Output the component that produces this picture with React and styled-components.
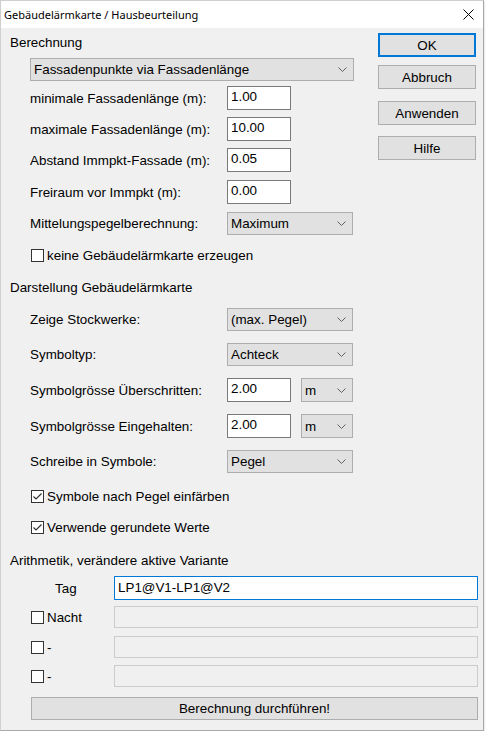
import React from 'react';
import styled, { createGlobalStyle } from 'styled-components';

const GlobalStyle = createGlobalStyle`
  html, body {
    margin: 0;
    padding: 0;
    background: #ffffff;
  }
  body {
    font-family: "Liberation Sans", Arial, sans-serif;
    font-size: 13.4px;
    color: #000;
  }
`;

const Window = styled.div`
  width: 484px;
  height: 731px;
  box-sizing: border-box;
  border: 1px solid #cfcfcf;
  border-right-color: #a9a9a9;
  border-bottom-color: #a9a9a9;
  box-shadow: 1px 1px 1px rgba(0, 0, 0, 0.08);
  background: #f0f0f0;
  display: flex;
  flex-direction: column;
  overflow: hidden;
`;

const TitleBar = styled.div`
  height: 27px;
  background: #ffffff;
  display: flex;
  align-items: center;
  justify-content: space-between;
  padding: 0 9px 0 3px;
  flex-shrink: 0;
`;

const Title = styled.span`
  font-family: "Segoe UI", "Noto Sans", sans-serif;
  font-size: 11px;
  color: #000;
  margin-top: -1px;
`;

const Body = styled.div`
  flex: 1;
  display: flex;
  flex-direction: column;
  padding: 0 0 0 9px;
`;

const Upper = styled.div`
  display: flex;
  align-items: flex-start;
`;

const FormColumn = styled.div`
  width: 345px;
  display: flex;
  flex-direction: column;
`;

const ButtonColumn = styled.div`
  display: flex;
  flex-direction: column;
  margin-left: 23px;
  padding-top: 5px;
`;

const SectionTitle = styled.div`
  height: 16px;
  line-height: 16px;
  margin-top: ${p => p.$gap}px;
  white-space: nowrap;
`;

const Row = styled.div`
  display: flex;
  align-items: center;
  height: ${p => p.$h || 24}px;
  margin-top: ${p => p.$gap}px;
  padding-left: 20px;
`;

const Label = styled.span`
  width: 197px;
  flex-shrink: 0;
  white-space: nowrap;
`;

const TextBox = styled.div`
  box-sizing: border-box;
  width: ${p => p.$w || 64}px;
  height: 24px;
  background: #ffffff;
  border: 1px solid #7a7a7a;
  padding: 2px 0 0 3px;
  line-height: 16px;
  white-space: nowrap;
`;

const ComboBox = styled.div`
  box-sizing: border-box;
  width: ${p => p.$w}px;
  height: ${p => p.$h || 23}px;
  margin-left: ${p => p.$ml || 0}px;
  background: #e1e1e1;
  border: 1px solid #adadad;
  display: flex;
  align-items: center;
  justify-content: space-between;
  padding: 0 6px 0 3px;
  white-space: nowrap;
`;

const Chevron = () => (
  <svg width="9" height="5" viewBox="0 0 9 5" fill="none">
    <path d="M0.5 0.5 L4.5 4.5 L8.5 0.5" stroke="#606060" strokeWidth="1" />
  </svg>
);

const Combo = ({ children, ...rest }) => (
  <ComboBox {...rest}>
    <span>{children}</span>
    <Chevron />
  </ComboBox>
);

const CheckRow = styled.label`
  display: flex;
  align-items: center;
  height: 16px;
  margin-top: ${p => p.$gap}px;
  padding-left: 21px;
  white-space: nowrap;
`;

const Box = styled.span`
  box-sizing: border-box;
  width: 13px;
  height: 13px;
  border: 1px solid #333333;
  background: #ffffff;
  margin-right: 3px;
  display: flex;
  align-items: center;
  justify-content: center;
  flex-shrink: 0;
`;

const CheckBox = ({ checked }) => (
  <Box>
    {checked && (
      <svg width="11" height="11" viewBox="0 0 11 11" fill="none">
        <path d="M1.5 5.5 L4 8 L9.5 2.5" stroke="#333" strokeWidth="1.2" />
      </svg>
    )}
  </Box>
);

const DialogButton = styled.button`
  box-sizing: border-box;
  width: 98px;
  height: 24px;
  margin-top: ${p => p.$gap || 0}px;
  background: #e1e1e1;
  border: ${p => (p.$default ? '2px solid #0078d7' : '1px solid #adadad')};
  font-family: "Liberation Sans", Arial, sans-serif;
  font-size: 13.4px;
  color: #000;
  padding: 0;
`;

const VariantRow = styled.div`
  display: flex;
  align-items: center;
  height: ${p => p.$h}px;
  margin-top: ${p => p.$gap}px;
`;

const VariantLabel = styled.div`
  width: 104px;
  flex-shrink: 0;
  display: flex;
  align-items: center;
  padding-left: ${p => (p.$check ? 21 : 45)}px;
  box-sizing: border-box;
  white-space: nowrap;
`;

const VariantInput = styled.div`
  box-sizing: border-box;
  width: 364px;
  height: ${p => p.$h}px;
  border: 1px solid ${p => (p.$active ? '#0078d7' : '#cccccc')};
  background: ${p => (p.$active ? '#ffffff' : '#f0f0f0')};
  padding: 3px 0 0 3px;
  line-height: 16px;
`;

const RunButton = styled.button`
  box-sizing: border-box;
  width: 447px;
  height: 23px;
  margin: 10px 0 0 21px;
  background: #e1e1e1;
  border: 1px solid #adadad;
  font-family: "Liberation Sans", Arial, sans-serif;
  font-size: 13.4px;
  color: #000;
  padding: 0;
`;

const CloseIcon = () => (
  <svg width="11" height="11" viewBox="0 0 11 11" fill="none">
    <path d="M0.5 0.5 L10.5 10.5 M10.5 0.5 L0.5 10.5" stroke="#000" strokeWidth="1" />
  </svg>
);

const App = () => (
  <>
    <GlobalStyle />
    <Window>
      <TitleBar>
        <Title>Gebäudelärmkarte / Hausbeurteilung</Title>
        <CloseIcon />
      </TitleBar>
      <Body>
        <Upper>
          <FormColumn>
            <SectionTitle $gap={7}>Berechnung</SectionTitle>
            <Row $gap={7} $h={23}>
              <Combo $w={324}>Fassadenpunkte via Fassadenlänge</Combo>
            </Row>
            <Row $gap={5}>
              <Label>minimale Fassadenlänge (m):</Label>
              <TextBox>1.00</TextBox>
            </Row>
            <Row $gap={7}>
              <Label>maximale Fassadenlänge (m):</Label>
              <TextBox>10.00</TextBox>
            </Row>
            <Row $gap={7}>
              <Label>Abstand Immpkt-Fassade (m):</Label>
              <TextBox>0.05</TextBox>
            </Row>
            <Row $gap={8}>
              <Label>Freiraum vor Immpkt (m):</Label>
              <TextBox>0.00</TextBox>
            </Row>
            <Row $gap={8} $h={23}>
              <Label>Mittelungspegelberechnung:</Label>
              <Combo $w={126}>Maximum</Combo>
            </Row>
            <CheckRow $gap={12}>
              <CheckBox />
              keine Gebäudelärmkarte erzeugen
            </CheckRow>

            <SectionTitle $gap={17}>Darstellung Gebäudelärmkarte</SectionTitle>
            <Row $gap={12} $h={23}>
              <Label>Zeige Stockwerke:</Label>
              <Combo $w={126}>(max. Pegel)</Combo>
            </Row>
            <Row $gap={12} $h={23}>
              <Label>Symboltyp:</Label>
              <Combo $w={126}>Achteck</Combo>
            </Row>
            <Row $gap={12}>
              <Label>Symbolgrösse Überschritten:</Label>
              <TextBox>2.00</TextBox>
              <Combo $w={52} $h={24} $ml={10}>m</Combo>
            </Row>
            <Row $gap={12}>
              <Label>Symbolgrösse Eingehalten:</Label>
              <TextBox>2.00</TextBox>
              <Combo $w={52} $h={24} $ml={10}>m</Combo>
            </Row>
            <Row $gap={12} $h={23}>
              <Label>Schreibe in Symbole:</Label>
              <Combo $w={126}>Pegel</Combo>
            </Row>
            <CheckRow $gap={15}>
              <CheckBox checked />
              Symbole nach Pegel einfärben
            </CheckRow>
            <CheckRow $gap={15}>
              <CheckBox checked />
              Verwende gerundete Werte
            </CheckRow>
          </FormColumn>

          <ButtonColumn>
            <DialogButton $default>OK</DialogButton>
            <DialogButton $gap={8}>Abbruch</DialogButton>
            <DialogButton $gap={12}>Anwenden</DialogButton>
            <DialogButton $gap={11}>Hilfe</DialogButton>
          </ButtonColumn>
        </Upper>

        <SectionTitle $gap={18}>Arithmetik, verändere aktive Variante</SectionTitle>
        <VariantRow $gap={7} $h={24}>
          <VariantLabel>Tag</VariantLabel>
          <VariantInput $h={24} $active>LP1@V1-LP1@V2</VariantInput>
        </VariantRow>
        <VariantRow $gap={6} $h={22}>
          <VariantLabel $check>
            <CheckBox />
            Nacht
          </VariantLabel>
          <VariantInput $h={22} />
        </VariantRow>
        <VariantRow $gap={8} $h={22}>
          <VariantLabel $check>
            <CheckBox />
            -
          </VariantLabel>
          <VariantInput $h={22} />
        </VariantRow>
        <VariantRow $gap={7} $h={22}>
          <VariantLabel $check>
            <CheckBox />
            -
          </VariantLabel>
          <VariantInput $h={22} />
        </VariantRow>
        <RunButton>Berechnung durchführen!</RunButton>
      </Body>
    </Window>
  </>
);

export default App;
